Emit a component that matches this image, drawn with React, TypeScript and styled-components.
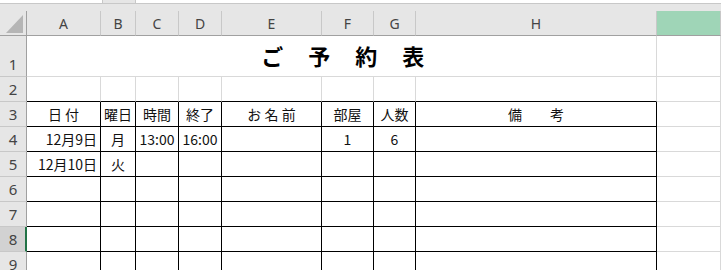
import React from "react";
import styled, { createGlobalStyle, css } from "styled-components";

const GlobalStyle = createGlobalStyle`
  html, body { margin: 0; padding: 0; background: #ffffff; overflow: hidden; }
  body { font-family: "Noto Sans CJK JP", "Noto Sans", sans-serif; }
`;

const COLS = [27, 74, 35, 43, 43, 100, 52, 42, 241];
const GRID_LINE = "#d9d9d9";
const HEADER_BG = "#e6e6e6";
const HEADER_SEP = "#c8c8c8";
const HEADER_EDGE = "#a0a0a0";

const Sheet = styled.div`
  width: 721px;
  height: 270px;
  overflow: hidden;
  background: #fff;
`;

const TopBar = styled.div`
  height: 11px;
  background: ${HEADER_BG};
  display: flex;
  flex-direction: column;
`;

const BoxRow = styled.div`
  height: 3px;
  display: flex;
`;

const NameBox = styled.div`
  width: 102px;
  background: #fff;
  border-right: 1px solid ${HEADER_SEP};
`;

const Spacer = styled.div`
  width: 32px;
`;

const FormulaBox = styled.div`
  flex: 1;
  background: #fff;
  border-left: 1px solid ${HEADER_SEP};
`;

const TopLine = styled.div`
  height: 1px;
  background: ${HEADER_SEP};
`;

const Grid = styled.div`
  display: grid;
  grid-template-columns: ${COLS.map((c) => `${c}px`).join(" ")} 1fr;
  grid-template-rows: 25px 41px 25px repeat(7, 25px);
`;

const Corner = styled.div`
  background: ${HEADER_BG};
  border-right: 1px solid ${HEADER_EDGE};
  border-bottom: 1px solid ${HEADER_EDGE};
  box-sizing: border-box;
  display: flex;
  align-items: flex-end;
  justify-content: flex-end;
  padding: 0 3px 2px 0;
`;

const ColHeader = styled.div<{ $selected?: boolean }>`
  box-sizing: border-box;
  background: ${(p) => (p.$selected ? "#9fd5b7" : HEADER_BG)};
  border-right: 1px solid ${HEADER_SEP};
  border-bottom: 1px solid ${HEADER_EDGE};
  color: #444;
  font-family: "Noto Sans", "Noto Sans CJK JP", sans-serif;
  font-size: 14px;
  display: flex;
  align-items: center;
  justify-content: center;
  padding-top: 1px;
`;

const RowHeader = styled.div<{ $selected?: boolean }>`
  box-sizing: border-box;
  background: ${(p) => (p.$selected ? "#d2d2d2" : HEADER_BG)};
  border-right: ${(p) => (p.$selected ? "2px solid #217346" : `1px solid ${HEADER_EDGE}`)};
  border-bottom: 1px solid ${HEADER_SEP};
  color: #444;
  font-family: "Noto Sans", "Noto Sans CJK JP", sans-serif;
  font-size: 15px;
  line-height: 24px;
  display: flex;
  align-items: flex-end;
  justify-content: center;
  padding-left: ${(p) => (p.$selected ? "1px" : "0")};
`;

type Align = "left" | "center" | "right";

const Cell = styled.div<{ $align?: Align; $boxed?: boolean; $topEdge?: boolean }>`
  box-sizing: border-box;
  border-right: 1px solid ${GRID_LINE};
  border-bottom: 1px solid ${GRID_LINE};
  color: #111;
  font-size: 14px;
  white-space: pre;
  display: flex;
  align-items: center;
  padding: 0 3px;
  justify-content: ${(p) =>
    p.$align === "right" ? "flex-end" : p.$align === "left" ? "flex-start" : "center"};
  ${(p) =>
    p.$boxed &&
    css`
      border-right-color: #000;
      border-bottom-color: #000;
    `}
  ${(p) =>
    p.$topEdge &&
    css`
      border-bottom-color: #000;
    `}
`;

const TitleCell = styled.div`
  grid-column: 2 / 10;
  box-sizing: border-box;
  border-right: 1px solid ${GRID_LINE};
  border-bottom: 1px solid ${GRID_LINE};
  display: flex;
  align-items: center;
  justify-content: center;
  padding-bottom: 2px;
  padding-left: 4px;
  font-size: 22px;
  font-weight: 700;
  letter-spacing: 1.5px;
  color: #000;
  white-space: pre;
`;

const Triangle = () => (
  <svg width="17" height="18" viewBox="0 0 17 18">
    <polygon points="17,0 17,18 0,18" fill="#b5b5b5" />
  </svg>
);

const LETTERS = ["A", "B", "C", "D", "E", "F", "G", "H", ""];

type CellData = { t: string; a?: Align };

const c = (t: string, a: Align = "center"): CellData => ({ t, a });

const TABLE: CellData[][] = [
  [c("日 付"), c("曜日"), c("時間"), c("終了"), c("お 名 前"), c("部屋"), c("人数"), c("備　　考")],
  [c("12月9日", "right"), c("月"), c("13:00"), c("16:00"), c(""), c("1"), c("6"), c("")],
  [c("12月10日", "right"), c("火"), c(""), c(""), c(""), c(""), c(""), c("")],
  [c(""), c(""), c(""), c(""), c(""), c(""), c(""), c("")],
  [c(""), c(""), c(""), c(""), c(""), c(""), c(""), c("")],
  [c(""), c(""), c(""), c(""), c(""), c(""), c(""), c("")],
  [c(""), c(""), c(""), c(""), c(""), c(""), c(""), c("")],
];

export default function App() {
  return (
    <Sheet>
      <GlobalStyle />
      <TopBar>
        <BoxRow>
          <NameBox />
          <Spacer />
          <FormulaBox />
        </BoxRow>
        <TopLine />
      </TopBar>
      <Grid>
        <Corner>
          <Triangle />
        </Corner>
        {LETTERS.map((l, i) => (
          <ColHeader key={`h${i}`} $selected={i === 8}>
            {l}
          </ColHeader>
        ))}

        <RowHeader>1</RowHeader>
        <TitleCell>ご　予　約　表</TitleCell>
        <Cell />

        <RowHeader>2</RowHeader>
        {Array.from({ length: 8 }).map((_, i) => (
          <Cell key={`r2-${i}`} $topEdge />
        ))}
        <Cell />

        {TABLE.map((row, r) => (
          <React.Fragment key={`row${r}`}>
            <RowHeader $selected={r + 3 === 8}>{r + 3}</RowHeader>
            {row.map((cell, i) => (
              <Cell key={`c${r}-${i}`} $boxed $align={cell.a}>
                {cell.t}
              </Cell>
            ))}
            <Cell />
          </React.Fragment>
        ))}
      </Grid>
    </Sheet>
  );
}
